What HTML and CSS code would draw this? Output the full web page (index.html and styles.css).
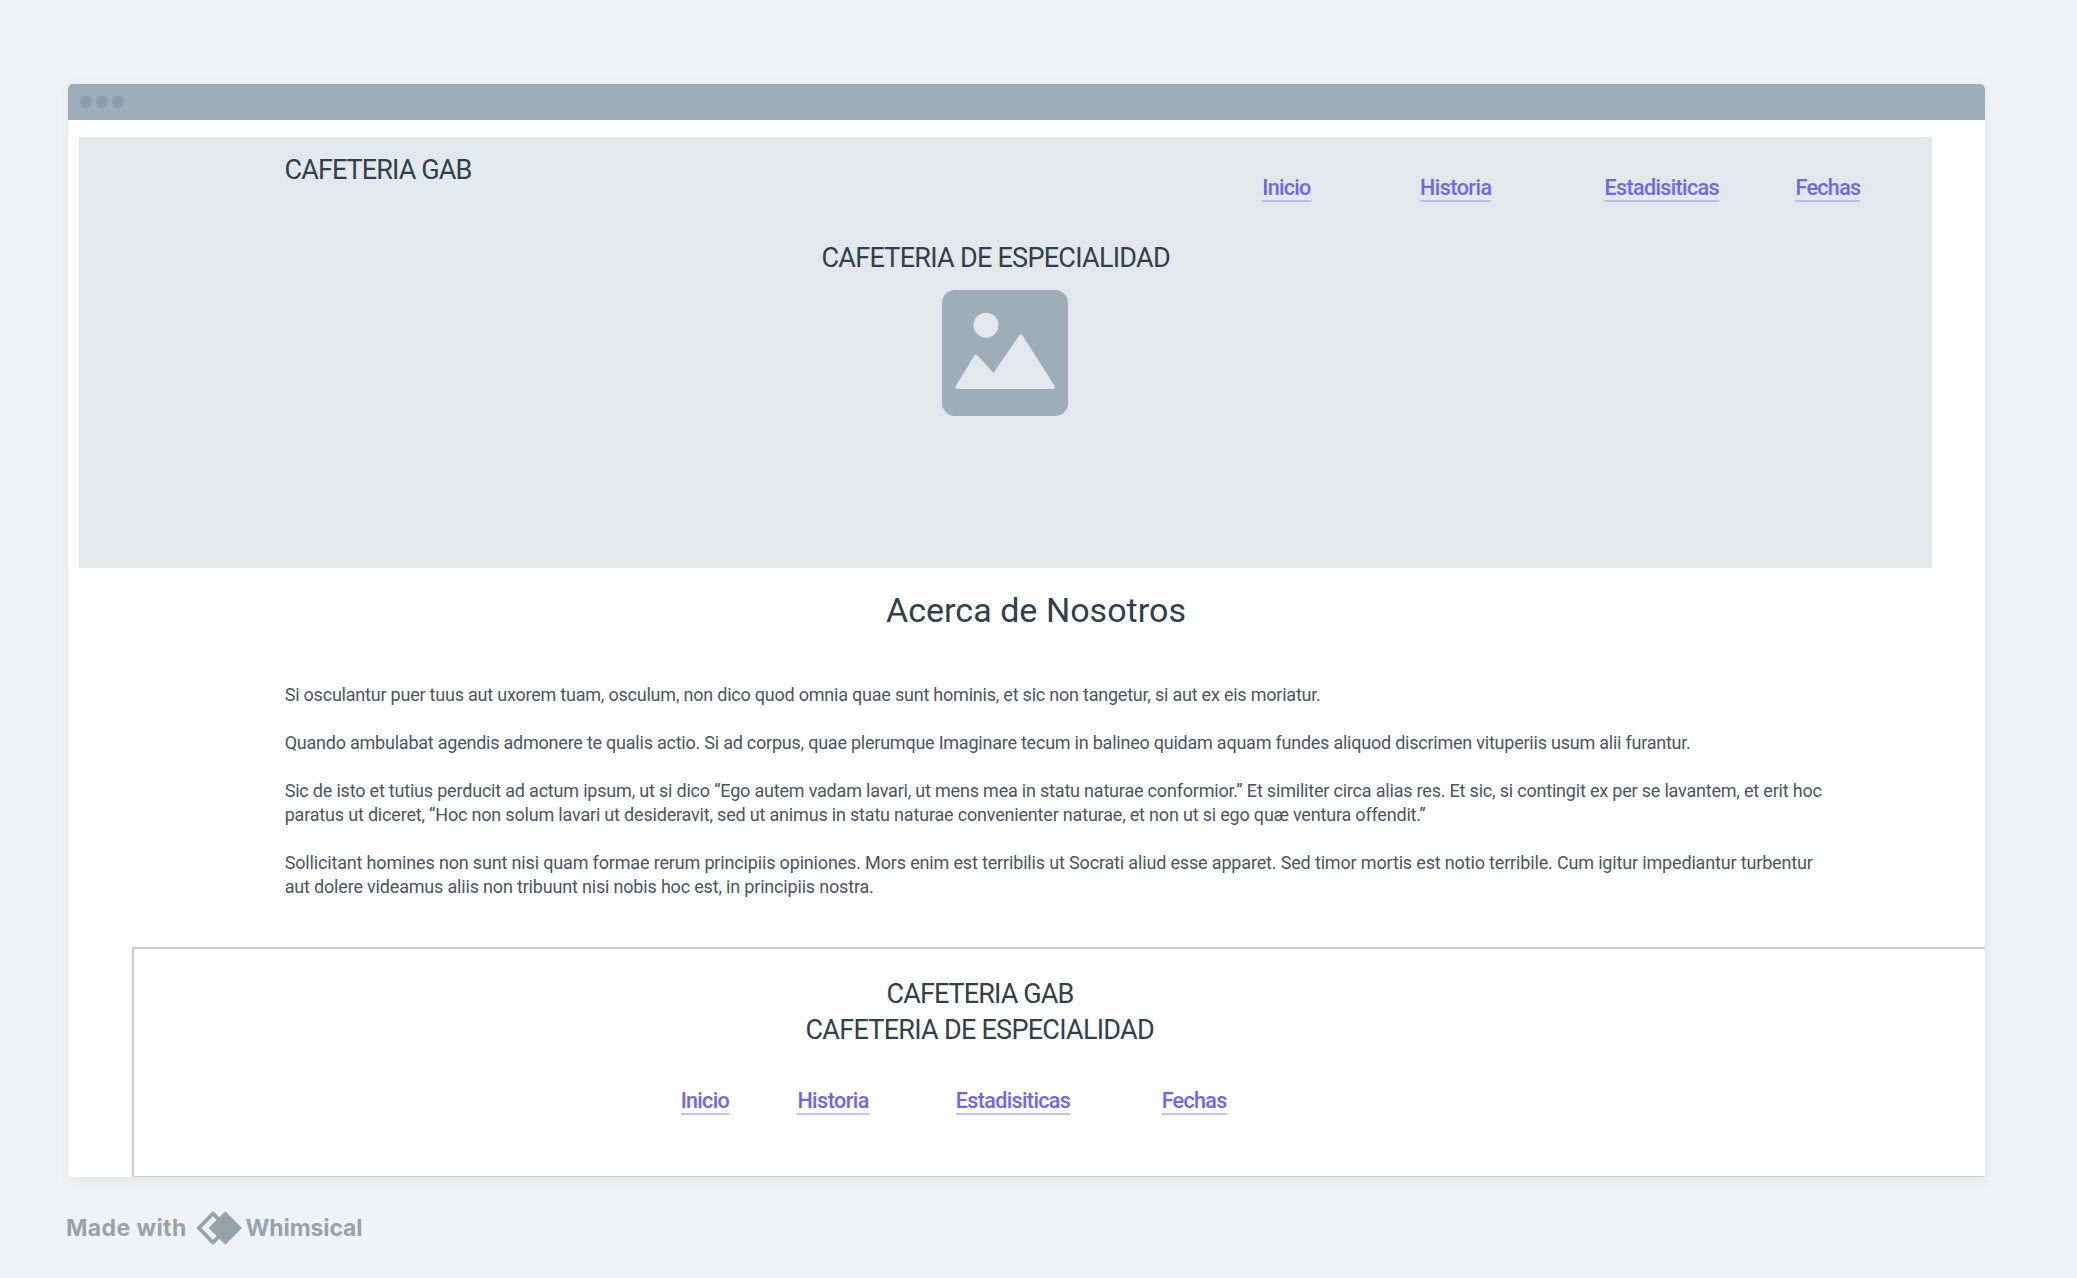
FILE: index.html
```html
<!DOCTYPE html>
<html lang="es">
<head>
<meta charset="utf-8">
<title>Cafeteria Gab</title>
<link rel="stylesheet" href="styles.css">
</head>
<body>
<main class="browser">
  <div class="titlebar"><i class="dot"></i><i class="dot"></i><i class="dot"></i></div>
  <header class="hero">
    <div class="hero-top">
      <div class="brand">CAFETERIA GAB</div>
      <nav class="nav hero-nav">
        <a class="link inicio">Inicio</a>
        <a class="link historia">Historia</a>
        <a class="link estadisticas">Estadisiticas</a>
        <a class="link fechas">Fechas</a>
      </nav>
    </div>
    <h1 class="brand tagline">CAFETERIA DE ESPECIALIDAD</h1>
    <svg class="picture" viewBox="0 0 126 126" aria-hidden="true">
      <rect width="126" height="126" rx="13" fill="#9eadba"/>
      <circle cx="44" cy="35.200" r="12.500" fill="#e2e8ec"/>
      <path d="M15.600 97L33.900 66.700L51.700 86.200L78.900 46.500L111 97Z" fill="#e2e8ec" stroke="#e2e8ec" stroke-width="4" stroke-linejoin="round"/>
    </svg>
  </header>
  <section class="about">
    <h2 class="about-title">Acerca de Nosotros</h2>
    <div class="copy">
      <p><span class="line l1">Si osculantur puer tuus aut uxorem tuam, osculum, non dico quod omnia quae sunt hominis, et sic non tangetur, si aut ex eis moriatur.</span></p>
      <p><span class="line l2">Quando ambulabat agendis admonere te qualis actio. Si ad corpus, quae plerumque Imaginare tecum in balineo quidam aquam fundes aliquod discrimen vituperiis usum alii furantur.</span></p>
      <p><span class="line l3">Sic de isto et tutius perducit ad actum ipsum, ut si dico “Ego autem vadam lavari, ut mens mea in statu naturae conformior.” Et similiter circa alias res. Et sic, si contingit ex per se lavantem, et erit hoc</span>
      <span class="line l4">paratus ut diceret, “Hoc non solum lavari ut desideravit, sed ut animus in statu naturae convenienter naturae, et non ut si ego quæ ventura offendit.”</span></p>
      <p><span class="line l5">Sollicitant homines non sunt nisi quam formae rerum principiis opiniones. Mors enim est terribilis ut Socrati aliud esse apparet. Sed timor mortis est notio terribile. Cum igitur impediantur turbentur</span>
      <span class="line l6">aut dolere videamus aliis non tribuunt nisi nobis hoc est, in principiis nostra.</span></p>
    </div>
  </section>
  <footer class="footer">
    <div class="brand">CAFETERIA GAB</div>
    <div class="brand tagline">CAFETERIA DE ESPECIALIDAD</div>
    <nav class="nav footer-nav">
      <a class="link inicio">Inicio</a>
      <a class="link historia">Historia</a>
      <a class="link estadisticas">Estadisiticas</a>
      <a class="link fechas">Fechas</a>
    </nav>
  </footer>
</main>
<div class="credit">
  <span class="made">Made with</span>
  <svg class="logo" viewBox="0 0 46 34" aria-hidden="true">
    <path d="M17 2.500L2.800 17L17 31.500L31 17Z" fill="none" stroke="#95a3ad" stroke-width="3.800" stroke-linejoin="round"/>
    <path d="M29.300 1.700L44.500 17L29.300 32.300L14 17Z" fill="#95a3ad" stroke="#95a3ad" stroke-width="2" stroke-linejoin="round"/>
  </svg>
  <span class="whimsical">Whimsical</span>
</div>
</body>
</html>
```
FILE: styles.css
```css
* {
  box-sizing: border-box;
}

body {
  margin: 0;
  padding: 83.500px 0 0 67.500px;
  width: 2077px;
  height: 1278px;
  overflow: hidden;
  background: #eff3f6;
  color: #2f404e;
  font-family: Roboto, "Liberation Sans", sans-serif;
}

.browser {
  display: flex;
  flex-direction: column;
  width: 1917.500px;
  height: 1093.500px;
  background: #fff;
  border-radius: 5px 5px 0 0;
  box-shadow: 0 3px 12px rgba(47, 64, 78, 0.08);
}

.titlebar {
  display: flex;
  flex: none;
  gap: 4px;
  height: 36.500px;
  padding: 12.300px;
  background: #9eadba;
  border-radius: 5px 5px 0 0;
}

.dot {
  width: 12px;
  height: 12px;
  border-radius: 50%;
  background: #8d9cab;
}

.hero {
  flex: none;
  width: 1852.500px;
  height: 431px;
  margin: 17px 0 0 11.500px;
  background: #e2e8ec;
}

.hero-top {
  display: flex;
  height: 103px;
  padding: 14.500px 0 0 205.500px;
}

.brand {
  width: 187px;
  margin: 0;
  font-size: 27px;
  font-weight: 400;
  line-height: 36px;
  letter-spacing: -0.900px;
  white-space: nowrap;
}

.tagline {
  width: 349px;
  letter-spacing: -0.730px;
}

.hero .tagline {
  margin-left: 742.500px;
}

.picture {
  display: block;
  width: 126px;
  height: 126px;
  margin: 13.500px 0 0 863.300px;
}

.nav {
  display: grid;
  justify-items: start;
}

.hero-nav {
  grid-template-columns: 157.700px 184.500px 191px 65px;
  margin: 22.500px 0 0 790.800px;
}

.link {
  height: 28px;
  border-bottom: 2px solid #bdb6f8;
  color: #7363f1;
  font-size: 21.500px;
  font-weight: 500;
  line-height: 27px;
  white-space: nowrap;
}

.inicio {
  width: 48.500px;
  letter-spacing: -0.700px;
}

.historia {
  width: 71.500px;
  letter-spacing: -0.512px;
}

.estadisticas {
  width: 114.700px;
  letter-spacing: -0.625px;
}

.fechas {
  width: 65px;
  letter-spacing: -0.660px;
}

.about {
  flex: none;
  height: 378.500px;
  padding-top: 19.500px;
}

.about-title {
  margin: 0 0 0 818.500px;
  font-size: 34px;
  font-weight: 400;
  line-height: 44px;
  letter-spacing: 0.032px;
}

.copy {
  display: flex;
  flex-direction: column;
  gap: 24px;
  margin: 51px 0 0 217.200px;
  color: #485663;
  font-size: 18px;
  line-height: 24px;
}

.copy p {
  margin: 0;
}

.line {
  display: block;
  white-space: nowrap;
}

.l1 { letter-spacing: -0.218px; }
.l2 { letter-spacing: -0.230px; }
.l3 { letter-spacing: -0.198px; }
.l4 { letter-spacing: -0.188px; }
.l5 { letter-spacing: -0.162px; }
.l6 { letter-spacing: -0.180px; }

.footer {
  display: flex;
  flex: 1;
  flex-direction: column;
  margin-left: 64.500px;
  padding-top: 27px;
  border: solid #c3cfda;
  border-width: 2px 0 1px 2px;
}

.footer .brand {
  margin-left: 752.500px;
}

.footer .tagline {
  margin-left: 671.500px;
}

.footer-nav {
  grid-template-columns: 116.700px 158.400px 205.900px 65px;
  margin: 39px 0 0 546.700px;
}

.footer-nav .link {
  border-color: #c6c0fb;
}

.credit {
  display: flex;
  align-items: center;
  height: 34px;
  margin: 34px 0 0 -1.500px;
  color: #95a3ad;
  font-family: Inter, "Liberation Sans", sans-serif;
  font-size: 23px;
  font-weight: 700;
  white-space: nowrap;
}

.made {
  width: 130px;
  letter-spacing: 0.400px;
}

.logo {
  width: 46px;
  height: 34px;
  margin-right: 3.500px;
}

.whimsical {
  letter-spacing: -0.097px;
}
```
